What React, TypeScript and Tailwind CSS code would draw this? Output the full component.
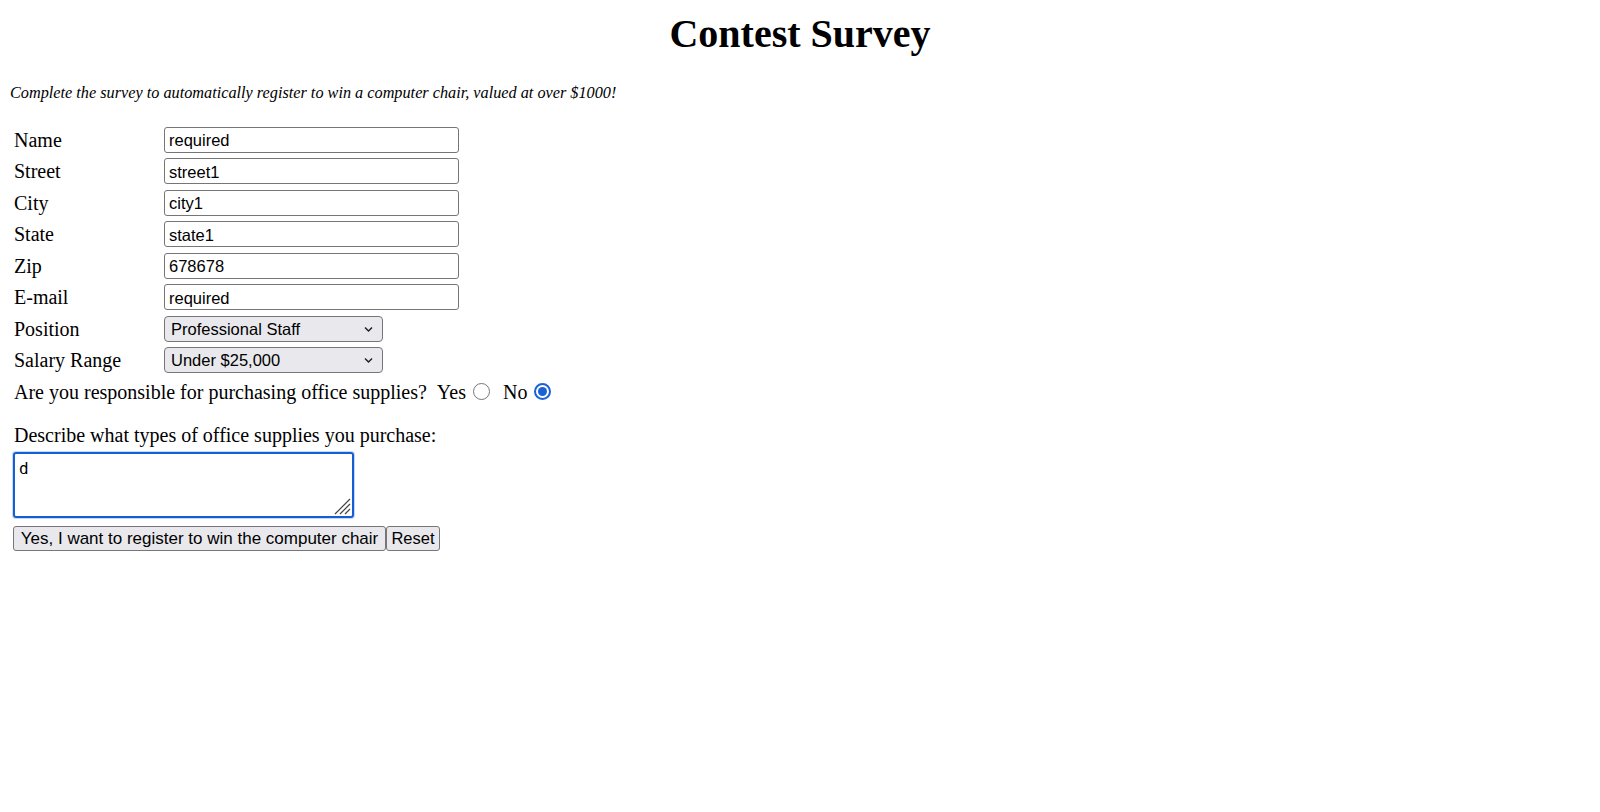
import React from "react";

const fields: { label: string; value: string }[] = [
  { label: "Name", value: "required" },
  { label: "Street", value: "street1" },
  { label: "City", value: "city1" },
  { label: "State", value: "state1" },
  { label: "Zip", value: "678678" },
  { label: "E-mail", value: "required" },
];

const selects: { label: string; value: string; options: string[] }[] = [
  {
    label: "Position",
    value: "Professional Staff",
    options: ["Professional Staff", "Management", "Administrative", "Other"],
  },
  {
    label: "Salary Range",
    value: "Under $25,000",
    options: ["Under $25,000", "$25,000 - $50,000", "$50,000 - $100,000", "Over $100,000"],
  },
];

function Radio({ checked }: { checked?: boolean }) {
  return checked ? (
    <span className="ml-[7px] inline-flex size-[17px] items-center justify-center rounded-full border-[2px] border-[#1a62d6] bg-white">
      <span className="size-[9px] rounded-full bg-[#1a62d6]" />
    </span>
  ) : (
    <span className="ml-[7px] inline-block size-[17px] rounded-full border border-[#767676] bg-white" />
  );
}

export default function App() {
  return (
    <div className="min-h-[812px] bg-white px-[10px] font-['Liberation_Serif',serif] text-[20px] text-black">
      <h1 className="pt-[12px] text-center text-[40px] leading-[44px] font-bold">Contest Survey</h1>

      <p className="mt-[28px] text-[16.25px] leading-[18px] italic">
        Complete the survey to automatically register to win a computer chair, valued at over $1000!
      </p>

      <div className="mt-[23px] flex flex-col gap-[2.5px]">
        {fields.map((f) => (
          <div key={f.label} className="flex h-[29px] items-center">
            <span className="w-[154px] pl-[4px]">{f.label}</span>
            <input
              defaultValue={f.value}
              className="h-[26px] w-[295px] rounded-[3px] border border-[#767676] px-[4px] pt-[2px] font-['Liberation_Sans',sans-serif] text-[16.5px] outline-none"
            />
          </div>
        ))}
        {selects.map((s) => (
          <div key={s.label} className="flex h-[29px] items-center">
            <span className="w-[154px] pl-[4px]">{s.label}</span>
            <div className="relative">
              <select
                defaultValue={s.value}
                className="block h-[26px] w-[219px] appearance-none rounded-[4px] border border-[#767676] bg-[#e9e9ed] pl-[6px] font-['Liberation_Sans',sans-serif] text-[16.5px] outline-none"
              >
                {s.options.map((o) => (
                  <option key={o}>{o}</option>
                ))}
              </select>
              <svg
                className="pointer-events-none absolute top-[10px] right-[10px]"
                width="9"
                height="7"
                viewBox="0 0 9 7"
                fill="none"
              >
                <path d="M1 1.5 L4.5 5 L8 1.5" stroke="#222" strokeWidth="1.5" />
              </svg>
            </div>
          </div>
        ))}
        <div className="flex h-[29px] items-center pl-[4px]">
          <span>Are you responsible for purchasing office supplies?</span>
          <span className="ml-[10px]">Yes</span>
          <Radio />
          <span className="ml-[13px]">No</span>
          <Radio checked />
        </div>
      </div>

      <p className="mt-[18px] pl-[4px] leading-[23px]">Describe what types of office supplies you purchase:</p>

      <div className="relative mt-[4.5px] ml-[3px] w-[341px]">
        <textarea
          defaultValue="d"
          className="block h-[66px] w-[341px] resize-none rounded-[3px] border-[2px] border-[#155fd3] px-[4px] py-[3px] font-['DejaVu_Sans_Mono',monospace] text-[16px] shadow-[0_0_0_1px_#c6d8f5] outline-none"
        />
        <svg
          className="pointer-events-none absolute right-[3px] bottom-[3px]"
          width="18"
          height="18"
          viewBox="0 0 18 18"
          fill="none"
        >
          <path d="M17 2 L2 17 M17 7 L7 17 M17 12 L12 17" stroke="#444" strokeWidth="1.2" />
        </svg>
      </div>

      <div className="mt-[8.5px] ml-[3px] flex font-['Liberation_Sans',sans-serif]">
        <button className="h-[25px] w-[373px] rounded-[3px] border border-[#767676] bg-[#e9e9ed] text-[17px] leading-none">
          Yes, I want to register to win the computer chair
        </button>
        <button className="h-[25px] w-[54px] rounded-[3px] border border-[#767676] bg-[#e9e9ed] text-[16.5px] leading-none">
          Reset
        </button>
      </div>
    </div>
  );
}
